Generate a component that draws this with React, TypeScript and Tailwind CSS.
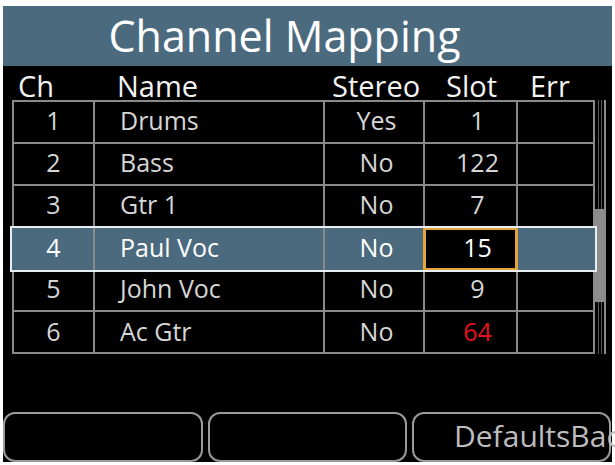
import React from "react";

type Channel = { ch: number; name: string; stereo: string; slot: number; err?: string; bad?: boolean };

const channels: Channel[] = [
  { ch: 1, name: "Drums", stereo: "Yes", slot: 1 },
  { ch: 2, name: "Bass", stereo: "No", slot: 122 },
  { ch: 3, name: "Gtr 1", stereo: "No", slot: 7 },
  { ch: 4, name: "Paul Voc", stereo: "No", slot: 15 },
  { ch: 5, name: "John Voc", stereo: "No", slot: 9 },
  { ch: 6, name: "Ac Gtr", stereo: "No", slot: 64, bad: true },
];

const SELECTED = 4;
const cols = "grid grid-cols-[81px_230px_100px_93px_75px]";

function Row({ c }: { c: Channel }) {
  const sel = c.ch === SELECTED;
  return (
    <div
      className={`${cols} h-[42px] text-[25px] leading-none ${
        sel ? "relative z-10 -mx-[2px] bg-[#4b6a7e] text-white outline-2 outline-[#e8eef2] pl-[2px]" : "border-b-2 border-[#8a8a8a] text-[#d6d6d6]"
      } last:border-b-0`}
    >
      <div className="flex items-center justify-center border-r-2 border-[#8a8a8a] pb-[3px]">{c.ch}</div>
      <div className="flex items-center border-r-2 border-[#8a8a8a] pl-[25px] pb-[3px]">{c.name}</div>
      <div className="flex items-center justify-center border-r-2 border-[#8a8a8a] pl-[5px] pb-[3px]">{c.stereo}</div>
      <div
        className={`flex items-center justify-center pl-[14px] pb-[3px] ${
          sel ? "bg-black border-[3px] border-[#e3a43e] -my-[1px] -ml-[2px]" : "border-r-2 border-[#8a8a8a]"
        } ${c.bad ? "text-[#e3141b]" : ""}`}
      >
        {c.slot}
      </div>
      <div className="flex items-center justify-center">{c.err ?? ""}</div>
    </div>
  );
}

function Scrollbar() {
  return (
    <div className="flex w-[11px] flex-col border-r-2 border-[#8a8a8a]">
      <div className="flex h-[109px] justify-center">
        <div className="w-[4px] border-x border-[#5a5a5a]" />
      </div>
      <div className="h-[93px] bg-[#8c8c8c]" />
      <div className="flex flex-1 justify-center">
        <div className="w-[4px] border-x border-[#5a5a5a]" />
      </div>
    </div>
  );
}

export default function App() {
  return (
    <div className="h-[465px] w-[615px] overflow-hidden bg-white pt-[6px] font-['Open_Sans',sans-serif]">
      <div className="mx-[3px] flex h-[456px] flex-col bg-black">
        <div className="flex h-[60px] items-center justify-center bg-[#4b6a7e] pr-[46px] pb-[2px] text-[43px] leading-none text-white">
          Channel Mapping
        </div>

        {/* column headings */}
        <div className="relative h-[34px] text-[29px] leading-none text-[#f2f2f2]">
          <span className="absolute left-[15px] top-[5px]">Ch</span>
          <span className="absolute left-[114px] top-[5px]">Name</span>
          <span className="absolute left-[329px] top-[5px]">Stereo</span>
          <span className="absolute left-[443px] top-[5px]">Slot</span>
          <span className="absolute left-[527px] top-[5px]">Err</span>
        </div>

        <div className="ml-[9px] flex h-[254px]">
          <div className="border-2 border-[#8a8a8a]">
            {channels.map((c) => (
              <Row key={c.ch} c={c} />
            ))}
          </div>
          <Scrollbar />
        </div>

        <div className="mt-auto flex h-[50px] gap-[5px] text-[30px] leading-none text-[#bdbdbd]">
          <button className="w-[200px] rounded-[12px] border-2 border-[#9a9a9a]" />
          <button className="w-[199px] rounded-[12px] border-2 border-[#9a9a9a]" />
          <button className="flex w-[199px] items-center rounded-[12px] border-2 border-[#9a9a9a] pl-[40px] pb-[2px]">
            <span className="whitespace-nowrap">DefaultsBack</span>
          </button>
        </div>
      </div>
    </div>
  );
}
